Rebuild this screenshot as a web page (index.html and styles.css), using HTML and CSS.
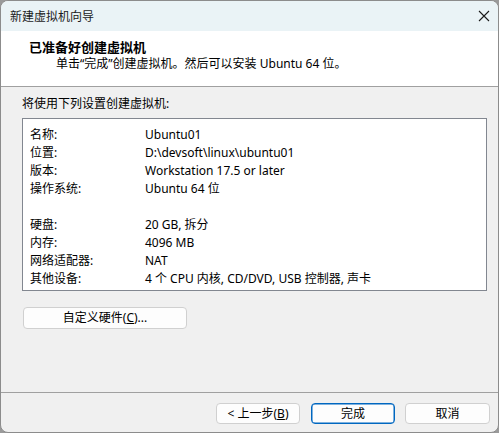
FILE: index.html
```html
<!DOCTYPE html>
<html>
<head>
<meta charset="utf-8">
<link rel="stylesheet" href="styles.css">
</head>
<body>
<div class="window">
  <div class="titlebar">
    <span class="title">新建虚拟机向导</span>
    <svg class="close" width="12" height="12" viewBox="0 0 12 12"><path d="M1 1 L11 11 M11 1 L1 11" stroke="#1a1a1a" stroke-width="1.1" fill="none"/></svg>
  </div>
  <div class="header">
    <div class="h-title">已准备好创建虚拟机</div>
    <div class="h-sub">单击“完成”创建虚拟机。然后可以安装 Ubuntu 64 位。</div>
  </div>
  <div class="body">
    <div class="label">将使用下列设置创建虚拟机:</div>
    <div class="list">
      <div class="row"><span class="k">名称:</span><span>Ubuntu01</span></div>
      <div class="row"><span class="k">位置:</span><span>D:\devsoft\linux\ubuntu01</span></div>
      <div class="row"><span class="k">版本:</span><span>Workstation 17.5 or later</span></div>
      <div class="row"><span class="k">操作系统:</span><span>Ubuntu 64 位</span></div>
      <div class="row"></div>
      <div class="row"><span class="k">硬盘:</span><span>20 GB, 拆分</span></div>
      <div class="row"><span class="k">内存:</span><span>4096 MB</span></div>
      <div class="row"><span class="k">网络适配器:</span><span>NAT</span></div>
      <div class="row"><span class="k">其他设备:</span><span>4 个 CPU 内核, CD/DVD, USB 控制器, 声卡</span></div>
    </div>
    <button class="btn custom">自定义硬件(<u>C</u>)...</button>
  </div>
  <div class="footer">
    <button class="btn fb">&lt; 上一步(<u>B</u>)</button>
    <button class="btn fb default">完成</button>
    <button class="btn fb cancel">取消</button>
  </div>
</div>
</body>
</html>
```
FILE: styles.css
```css
html, body {
  margin: 0;
  padding: 0;
  background: #9a9a9a;
}
body {
  font-family: "Noto Sans", "Noto Sans CJK SC", sans-serif;
  font-size: 12px;
  color: #000;
}
.window {
  width: 499px;
  height: 433px;
  box-sizing: border-box;
  border: 1px solid #8c8c8c;
  border-radius: 8px;
  overflow: hidden;
  background: #f0f0f0;
  display: flex;
  flex-direction: column;
}
.titlebar {
  height: 30px;
  background: #eaf3f6;
  display: flex;
  align-items: center;
  justify-content: space-between;
  padding: 0 9px 0 9px;
  flex: none;
}
.title {
  font-size: 12px;
  color: #1a1a1a;
}
.close {
  display: block;
  margin-right: -1px;
}
.header {
  height: 55px;
  background: #fff;
  border-bottom: 1px solid #a0a0a0;
  box-sizing: content-box;
  padding-left: 28px;
  flex: none;
}
.h-title {
  font-weight: bold;
  font-size: 13px;
  line-height: 18px;
  margin-top: 7px;
}
.h-sub {
  padding-left: 27px;
  line-height: 16px;
  margin-top: 0px;
}
.body {
  flex: 1;
  padding: 0 11px 0 21px;
  display: flex;
  flex-direction: column;
  align-items: flex-start;
}
.label {
  height: 16px;
  line-height: 16px;
  margin-top: 9px;
}
.list {
  align-self: stretch;
  margin-top: 6px;
  background: #fff;
  border: 1px solid #828790;
  padding: 7px 0 2px 7px;
}
.row {
  height: 18px;
  line-height: 18px;
  display: flex;
  white-space: nowrap;
}
.k {
  width: 115px;
  flex: none;
}
.btn {
  font-family: inherit;
  font-size: 12px;
  color: #000;
  background: #fdfdfd;
  border: 1px solid #d0d0d0;
  border-radius: 4px;
  padding: 0;
  margin: 0;
  box-sizing: border-box;
  line-height: 1;
}
.btn u {
  text-underline-offset: 1px;
}
.custom {
  width: 164px;
  height: 22px;
  margin-top: 16px;
  margin-left: 1px;
}
.footer {
  height: 39px;
  border-top: 1px solid #a0a0a0;
  box-sizing: content-box;
  display: flex;
  align-items: flex-start;
  justify-content: flex-end;
  padding-right: 8px;
  flex: none;
}
.fb {
  width: 84px;
  height: 21px;
  margin-top: 10px;
  margin-left: 11px;
}
.fb.default {
  border: 1px solid #0067c0;
  box-shadow: inset 0 0 0 0.5px #0067c0;
}
.fb.cancel {
  width: 85px;
  margin-left: 10px;
}
```
